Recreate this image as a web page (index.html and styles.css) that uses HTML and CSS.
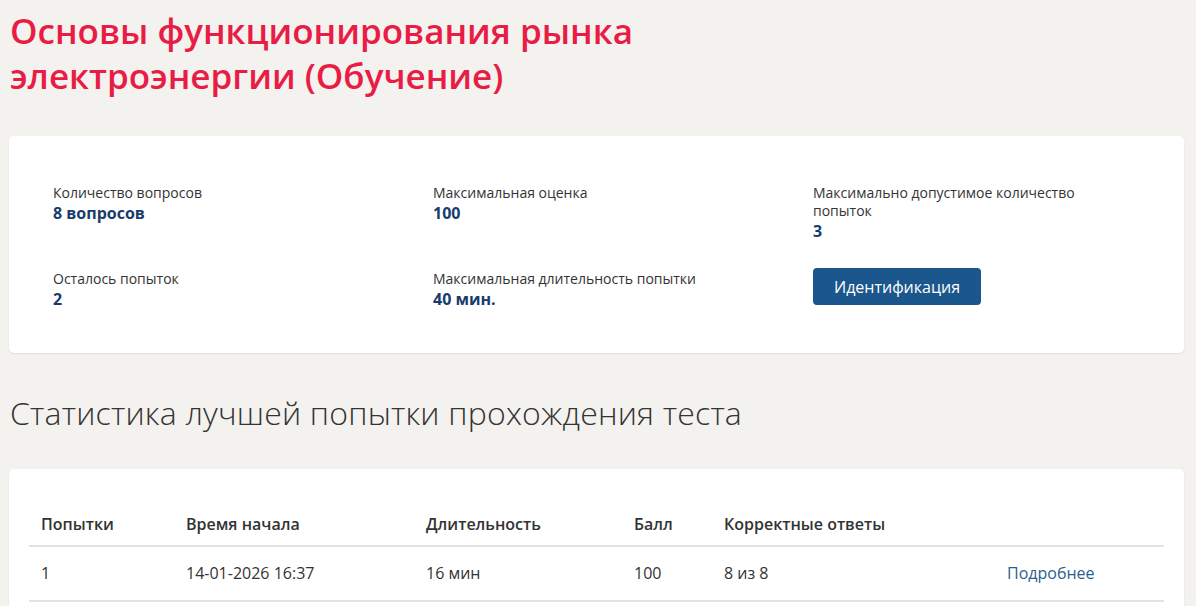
FILE: index.html
```html
<!DOCTYPE html>
<html lang="ru">
<head>
    <meta charset="UTF-8">
    <meta name="viewport" content="width=device-width, initial-scale=1.0">
    <title>Основы функционирования рынка электроэнергии (Обучение)</title>
    <link rel="stylesheet" href="styles.css">
</head>
<body>
    <div class="page">
        <h1 class="title">Основы функционирования рынка электроэнергии (Обучение)</h1>

        <div class="card info">
            <div class="info-item">
                <div class="label">Количество вопросов</div>
                <div class="value">8 вопросов</div>
            </div>
            <div class="info-item">
                <div class="label">Максимальная оценка</div>
                <div class="value">100</div>
            </div>
            <div class="info-item">
                <div class="label">Максимально допустимое количество попыток</div>
                <div class="value">3</div>
            </div>
            <div class="info-item">
                <div class="label">Осталось попыток</div>
                <div class="value">2</div>
            </div>
            <div class="info-item">
                <div class="label">Максимальная длительность попытки</div>
                <div class="value">40 мин.</div>
            </div>
            <div class="info-item">
                <button type="button" class="btn">Идентификация</button>
            </div>
        </div>

        <h2 class="subtitle">Статистика лучшей попытки прохождения теста</h2>

        <div class="card stats">
            <table>
                <thead>
                    <tr>
                        <th class="c-try">Попытки</th>
                        <th class="c-start">Время начала</th>
                        <th class="c-dur">Длительность</th>
                        <th class="c-score">Балл</th>
                        <th class="c-correct">Корректные ответы</th>
                        <th></th>
                    </tr>
                </thead>
                <tbody>
                    <tr>
                        <td>1</td>
                        <td>14-01-2026 16:37</td>
                        <td>16 мин</td>
                        <td>100</td>
                        <td>8 из 8</td>
                        <td><a href="#">Подробнее</a></td>
                    </tr>
                </tbody>
            </table>
        </div>
    </div>
</body>
</html>
```

FILE: styles.css
```css
body {
    margin: 0;
    background-color: #f3f2ef;
    font-family: "Open Sans", "Noto Sans", sans-serif;
    color: #333;
}
.page {
    padding: 0 12px 0 9px;
}
.title {
    margin: 0;
    padding: 8px 0 0 1px;
    max-width: 680px;
    font-size: 35px;
    line-height: 45px;
    font-weight: 600;
    color: #e81c44;
}
.card {
    background: white;
    border-radius: 5px;
    box-shadow: 0 1px 2px rgba(0, 0, 0, 0.08);
}
.info {
    margin-top: 38px;
    padding: 48px 20px 43px 44px;
    display: grid;
    grid-template-columns: repeat(3, 380px);
    row-gap: 28px;
    align-items: start;
}
.label {
    font-size: 14px;
    line-height: 18px;
    color: #333;
    max-width: 300px;
}
.value {
    font-size: 16px;
    line-height: 22px;
    font-weight: 700;
    color: #183c6b;
}
.btn {
    margin-top: -2px;
    padding: 0 21px;
    height: 37px;
    border: none;
    border-radius: 4px;
    background-color: #1b568c;
    color: white;
    font-family: inherit;
    font-size: 16px;
    cursor: pointer;
}
.subtitle {
    margin: 40px 0 0 1px;
    font-size: 32px;
    line-height: 40px;
    font-weight: 300;
    letter-spacing: 0.2px;
    color: #333;
}
.stats {
    margin-top: 36px;
    padding: 34px 20px 20px 20px;
}
table {
    width: 100%;
    border-collapse: collapse;
    font-size: 16px;
}
th {
    text-align: left;
    font-weight: 600;
    padding: 11px 12px 10px 12px;
    line-height: 21px;
    border-bottom: 2px solid #e3e3e3;
}
td {
    padding: 16px 12px;
    line-height: 21px;
    border-bottom: 2px solid #e3e3e3;
}
.c-try { width: 121px; }
.c-start { width: 216px; }
.c-dur { width: 184px; }
.c-score { width: 66px; }
.c-correct { width: 259px; }
a {
    color: #2b5f8f;
    text-decoration: none;
}
```
